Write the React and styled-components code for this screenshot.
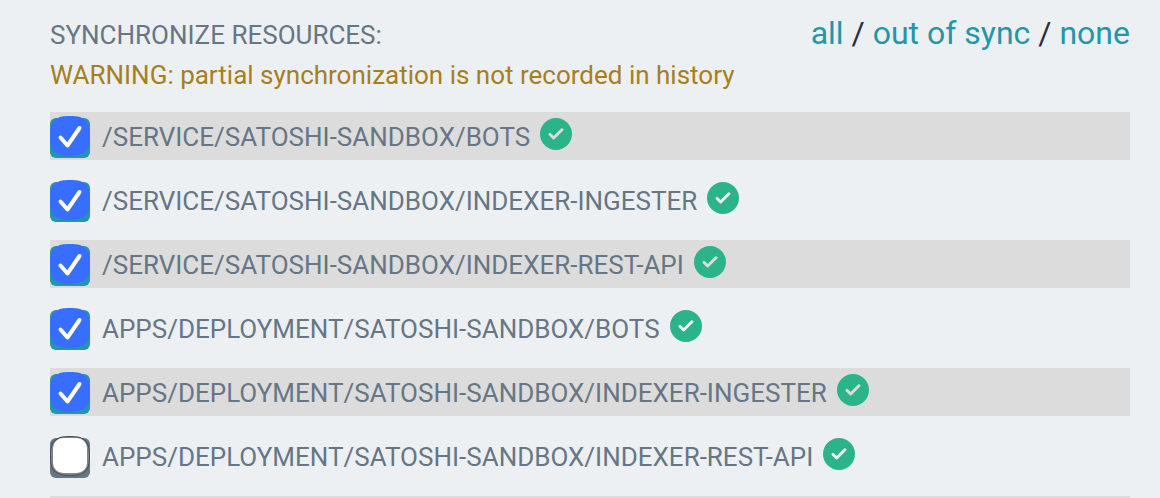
import React, { useState } from 'react';
import styled, { createGlobalStyle } from 'styled-components';

const GlobalStyle = createGlobalStyle`
  body {
    margin: 0;
    background: #ecf0f3;
    color: #363c4a;
    font-family: Roboto, "Liberation Sans", sans-serif;
  }
`;

const Panel = styled.main`
  box-sizing: border-box;
  height: 100vh;
  overflow: hidden;
  padding: 13px 30px 0 50px;
`;

const Header = styled.header`
  display: flex;
  justify-content: space-between;
  align-items: flex-start;
`;

const Title = styled.h1`
  margin: 0;
  padding-top: 2px;
  color: #667684;
  font-size: 26px;
  font-weight: 400;
  line-height: 40px;
`;

const Filters = styled.nav`
  font-size: 32px;
  line-height: 40px;
  color: #2c2e3e;
`;

const FilterLink = styled.a`
  color: #2496a9;
  text-decoration: none;
`;

const Warning = styled.p`
  margin: 0 0 17px;
  color: #a67f1c;
  font-size: 26px;
  line-height: 40px;
`;

const List = styled.ul`
  margin: 0;
  padding: 0;
  list-style: none;
  display: flex;
  flex-direction: column;
  gap: 16px;
`;

const Row = styled.li`
  display: flex;
  align-items: center;
  gap: 10px;
  height: 48px;
  flex-shrink: 0;

  &:nth-child(odd) {
    background: #dcdcdc;
  }
`;

const Label = styled.label`
  display: flex;
  align-items: center;
  gap: 12px;
  color: #667684;
  font-size: 26px;
  white-space: nowrap;
  cursor: pointer;
`;

const ResourceName = styled.span`
  padding-top: 2px;
  line-height: 46px;
`;

const CheckBox = styled.span`
  position: relative;
  width: 40px;
  height: 40px;
  margin-top: 4px;
  border-radius: 6px;
  background: ${props => (props.$checked ? '#2496a9' : '#667684')};

  input {
    appearance: none;
    display: block;
    width: 100%;
    height: 100%;
    margin: 0;
    cursor: pointer;
  }

  svg {
    position: absolute;
    left: 0;
    bottom: 2px;
    pointer-events: none;
  }
`;

const StatusIcon = styled.svg`
  margin-bottom: 4px;
`;

const RESOURCES = [
    {name: '/SERVICE/SATOSHI-SANDBOX/BOTS', checked: true},
    {name: '/SERVICE/SATOSHI-SANDBOX/INDEXER-INGESTER', checked: true},
    {name: '/SERVICE/SATOSHI-SANDBOX/INDEXER-REST-API', checked: true},
    {name: 'APPS/DEPLOYMENT/SATOSHI-SANDBOX/BOTS', checked: true},
    {name: 'APPS/DEPLOYMENT/SATOSHI-SANDBOX/INDEXER-INGESTER', checked: true},
    {name: 'APPS/DEPLOYMENT/SATOSHI-SANDBOX/INDEXER-REST-API', checked: false},
];

const SQUIRCLE = 'M20 0C27 0 31 .7 34.2 3.2C38.5 6.5 40 11 40 20C40 29 38.5 33.5 34.8 36.3C31.5 39 27 40 20 40C13 40 8.5 39 5.2 36.3C1.5 33.5 0 29 0 20C0 11 1.5 6.5 5.8 3.2C9 .7 13 0 20 0Z';

const CheckMark = ({checked}) => (
    <svg width="40" height="40" viewBox="0 0 40 40" aria-hidden="true">
        {checked ? (
            <>
                <path d={SQUIRCLE} fill="#376eff"/>
                <path d="M10.5 21.5L17.5 29.5L29.5 12" fill="none" stroke="#fff" strokeWidth="4" strokeLinecap="round" strokeLinejoin="round"/>
            </>
        ) : (
            <>
                <path d={SQUIRCLE} fill="#4b5157"/>
                <path d={SQUIRCLE} transform="translate(1 1) scale(.95)" fill="#858585"/>
                <rect x="3" y="2" width="34" height="35" rx="10" fill="#fff"/>
            </>
        )}
    </svg>
);

const Synced = () => (
    <StatusIcon width="32" height="32" viewBox="0 0 32 32" role="img" aria-label="Synced">
        <path
            fillRule="evenodd"
            fill="#2bb38a"
            d="M16 0A16 16 0 1 1 16 32A16 16 0 1 1 16 0ZM10.9 15.2A1.5 1.5 0 0 0 8.8 17.3L12.6 21.1A1.5 1.5 0 0 0 14.7 21.1L23.2 12.6A1.5 1.5 0 0 0 21.1 10.5L13.7 18Z"
        />
    </StatusIcon>
);

const App = () => {
    const [resources, setResources] = useState(RESOURCES);

    const toggle = index => {
        setResources(resources.map((item, i) => (i === index ? {...item, checked: !item.checked} : item)));
    };

    const select = (event, checked) => {
        event.preventDefault();
        setResources(resources.map(item => ({...item, checked})));
    };

    return (
        <Panel>
            <GlobalStyle/>
            <Header>
                <Title>SYNCHRONIZE RESOURCES:</Title>
                <Filters>
                    <FilterLink href="#all" onClick={e => select(e, true)}>all</FilterLink>
                    {' / '}
                    <FilterLink href="#out-of-sync" onClick={e => select(e, false)}>out of sync</FilterLink>
                    {' / '}
                    <FilterLink href="#none" onClick={e => select(e, false)}>none</FilterLink>
                </Filters>
            </Header>
            <Warning>WARNING: partial synchronization is not recorded in history</Warning>
            <List>
                {resources.map((item, index) => (
                    <Row key={item.name}>
                        <Label>
                            <CheckBox $checked={item.checked}>
                                <input type="checkbox" checked={item.checked} onChange={() => toggle(index)}/>
                                <CheckMark checked={item.checked}/>
                            </CheckBox>
                            <ResourceName>{item.name}</ResourceName>
                        </Label>
                        <Synced/>
                    </Row>
                ))}
                <Row aria-hidden="true"/>
            </List>
        </Panel>
    );
};

export default App;
